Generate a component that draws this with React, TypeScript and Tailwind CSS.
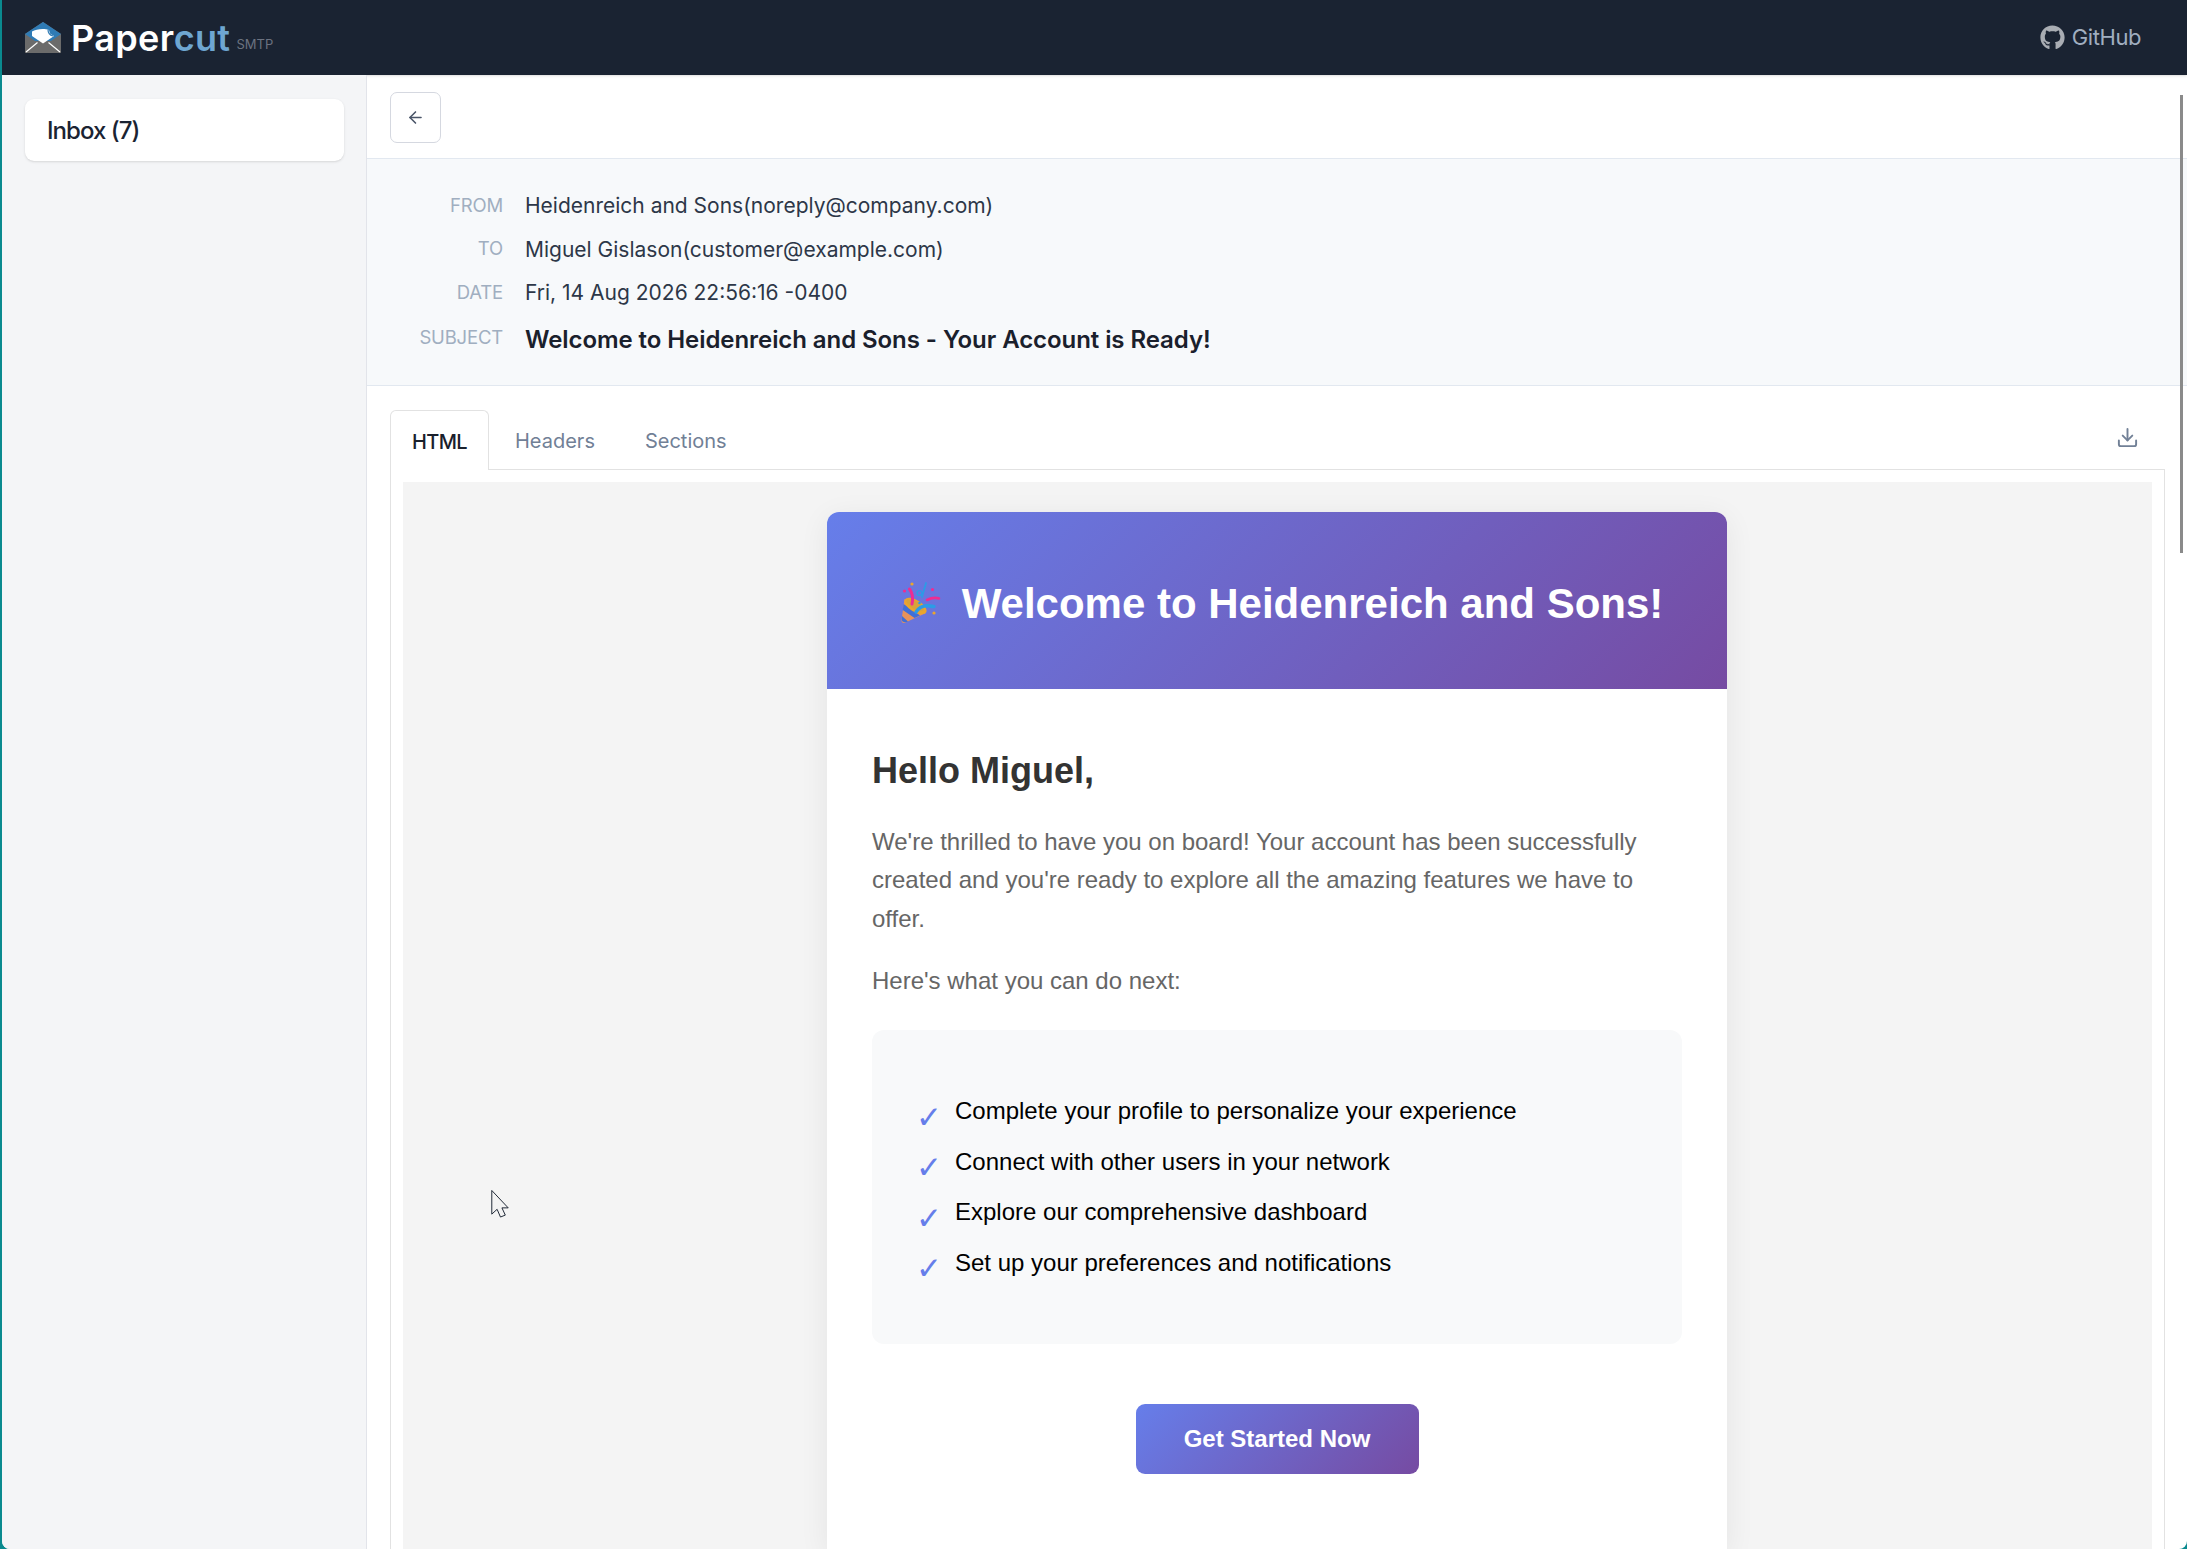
import { ArrowLeft, Download } from "lucide-react";
import { FaGithub } from "react-icons/fa";

const metaRows = [
  { label: "From", value: "Heidenreich and Sons(noreply@company.com)" },
  { label: "To", value: "Miguel Gislason(customer@example.com)" },
  { label: "Date", value: "Fri, 14 Aug 2026 22:56:16 -0400" },
];

const steps = [
  "Complete your profile to personalize your experience",
  "Connect with other users in your network",
  "Explore our comprehensive dashboard",
  "Set up your preferences and notifications",
];

function Logo() {
  return (
    <svg viewBox="0 0 36 31" className="w-[36px] h-[31px] shrink-0">
      <path d="M18 0 36 12V31H0V12Z" fill="#6b6b6b" />
      <path d="M18 0 36 12 26 19H10L0 12Z" fill="#2f7bb5" />
      <path d="M7 9.5c4-2.5 12-3.5 17-1.5l1 3.5 4 2.5-11 7.5L7 14Z" fill="#fff" />
      <path d="M23 7.5c0 3 1 5.5 5 6.5" fill="none" stroke="#2f7bb5" strokeWidth="1.2" />
      <path d="M1 30 12.5 20.5M35 30 23.5 20.5" stroke="#fff" strokeWidth="1.2" />
    </svg>
  );
}

// party popper, drawn because the emoji font here is not the one in the picture
function Popper() {
  return (
    <svg viewBox="0 0 40 42" role="img" aria-label="🎉" className="mt-[5px] h-[42px] w-[40px] shrink-0">
      <path d="M3.5 17 0.5 38c-.3 2.5 2 3.5 4 2.5L25 31Z" fill="#e8925a" />
      <path d="M2.6 22 19 33.5l-5.500 2.600L1.800 28ZM1 34l6 5.500c-2.800 1.800-6.500.5-6.300-2.500Z" fill="#3f6fd8" />
      <ellipse cx="14.5" cy="24" rx="12.5" ry="6" transform="rotate(32 14.5 24)" fill="#eba52c" />
      <ellipse cx="14" cy="23" rx="10" ry="4" transform="rotate(32 14 23)" fill="#d9a23a" />
      <path d="M8.5 7c3 4 4 8 2.5 15" fill="none" stroke="#ee2c92" strokeWidth="3" strokeLinecap="round" />
      <path d="M15 30c3-4.5 8-7 14-6 1 .2 2.500.5 4 .5" fill="none" stroke="#2c9be6" strokeWidth="3.400" strokeLinecap="round" />
      <path d="M26 18c3-1.500 7-3 12-1.500" fill="none" stroke="#ee2c92" strokeWidth="2.600" strokeLinecap="round" />
      <path d="M25 1 21 15" fill="none" stroke="#2c9be6" strokeWidth="1.800" strokeLinecap="round" />
      <circle cx="18.500" cy="11" r="2.400" fill="none" stroke="#2c9be6" strokeWidth="1.400" />
      <circle cx="11" cy="2" r="1.600" fill="#eba52c" />
      <circle cx="3.500" cy="9" r="1.600" fill="#ee2c92" />
      <circle cx="31.500" cy="7.500" r="1.600" fill="#ee2c92" />
      <circle cx="33" cy="31" r="1.600" fill="#eba52c" />
      <circle cx="18.500" cy="21" r="1.300" fill="#2c9be6" />
    </svg>
  );
}

function EmailPreview() {
  return (
    <div className="ml-[424px] mt-[30px] w-[900px] rounded-t-[12px] bg-white shadow-[0_6px_30px_rgba(0,0,0,0.07)] font-['Liberation_Sans',sans-serif]">
      <div className="flex h-[177px] items-center justify-center gap-[21px] rounded-t-[12px] bg-[linear-gradient(135deg,#667eea,#764ba2)] pl-[10px] text-[42px] font-bold text-white">
        <Popper />
        <h1 className="mt-[6px] leading-none">Welcome to Heidenreich and Sons!</h1>
      </div>
      <div className="px-[45px] pt-[60px]">
        <h2 className="text-[36px] leading-[44px] font-bold text-[#333333]">Hello Miguel,</h2>
        <p className="mt-[30px] text-[24px] leading-[38.4px] text-[#666666]">
          We're thrilled to have you on board! Your account has been successfully created and you're ready to explore all the amazing features we have to offer.
        </p>
        <p className="mt-[24px] text-[24px] leading-[38.4px] text-[#666666]">Here's what you can do next:</p>
        <div className="mt-[29px] flex h-[314px] flex-col justify-center gap-[14.5px] rounded-[12px] bg-[#f8f9fa] px-[45px] pt-[1px]">
          {steps.map((step) => (
            <div key={step} className="flex h-[36px] items-center text-[24px] text-black">
              <span className="-ml-[1px] w-[39px] shrink-0 pt-[12px] text-[31px] leading-none text-[#667eea] font-['DejaVu_Sans',sans-serif]">✓</span>
              <span>{step}</span>
            </div>
          ))}
        </div>
        <div className="mt-[60px] flex justify-center">
          <a className="flex h-[70px] w-[283px] items-center justify-center rounded-[9px] bg-[linear-gradient(135deg,#667eea,#764ba2)] text-[24px] font-bold text-white">
            Get Started Now
          </a>
        </div>
        <div className="mt-[75px] border-t border-[#e0e0e0]" />
      </div>
    </div>
  );
}

export default function App() {
  return (
    <div className="relative h-screen overflow-hidden bg-[#0a8a8f] font-['Inter',sans-serif]">
      <div className="ml-[2px] flex h-full flex-col overflow-hidden rounded-b-[8px] bg-white">
        <header className="flex h-[75px] shrink-0 items-center justify-between bg-[#1a2332] pl-[23px] pr-[46px] shadow-sm">
          <div className="flex items-center">
            <Logo />
            <span className="ml-[10px] text-[36px] leading-none font-semibold tracking-[0.01em] text-white">
              Paper<span className="text-[#6ea6d1]">cut</span>
            </span>
            <span className="ml-[6px] mt-[14px] text-[13px] leading-none text-[#6b7280]">SMTP</span>
          </div>
          <a className="flex items-center gap-[7px] text-[22px] tracking-[-0.02em] text-[#a0aec0]">
            <FaGithub className="h-[25px] w-[25px] text-[#a9adb3]" />
            GitHub
          </a>
        </header>

        <div className="flex min-h-0 flex-1">
          <aside className="w-[365px] shrink-0 border-r border-[#e2e4ea] bg-[#f4f5f7] pl-[23px] pr-[22px] pt-[24px]">
            <div className="flex h-[62px] items-center rounded-[9px] bg-white px-[22px] pt-[2px] text-[24px] font-medium tracking-[-0.04em] text-[#1a2332] shadow-sm">
              Inbox (7)
            </div>
          </aside>

          <main className="min-w-0 flex-1">
            <div className="flex h-[84px] items-center border-b border-[#e2e8f0] pl-[23px] pt-[2px]">
              <button className="flex h-[51px] w-[51px] items-center justify-center rounded-[7px] border border-[#d5d8e0] bg-white text-[#4a5568]">
                <ArrowLeft className="h-[19px] w-[19px]" strokeWidth={2} />
              </button>
            </div>

            <div className="flex h-[227px] flex-col border-b border-[#e2e8f0] bg-[#f7f9fb] pl-[22px] pt-[25px]">
              {metaRows.map((row) => (
                <div key={row.label} className="flex h-[43.5px] items-center">
                  <span className="w-[114px] text-right text-[18.5px] uppercase tracking-[-0.01em] text-[#a0aec0]">{row.label}</span>
                  <span className="ml-[22px] text-[21px] text-[#2d3748]">{row.value}</span>
                </div>
              ))}
              <div className="flex h-[49px] items-center pt-[1px]">
                <span className="mb-[4px] w-[114px] text-right text-[18.5px] uppercase tracking-[-0.01em] text-[#a0aec0]">Subject</span>
                <span className="ml-[22px] text-[24px] font-semibold tracking-[-0.003em] text-[#1a202c]">
                  Welcome to Heidenreich and Sons - Your Account is Ready!
                </span>
              </div>
            </div>

            <div className="pl-[23px] pr-[22px] pt-[24px]">
              <div className="flex h-[60px] items-stretch border-b border-[#e2e2e2] text-[20px]">
                <div className="-mb-px flex w-[99px] items-center justify-center rounded-t-[6px] border border-b-0 border-[#e2e2e2] bg-white pt-[2px] font-medium tracking-[-0.03em] text-[#1a202c]">
                  HTML
                </div>
                <div className="ml-[26px] flex items-center pt-[2px] text-[#718096]">Headers</div>
                <div className="ml-[50px] flex items-center pt-[2px] text-[#718096]">Sections</div>
                <div className="ml-auto flex items-start pr-[26px] pt-[16px] text-[#718096]">
                  <Download className="h-[23px] w-[23px]" strokeWidth={2} />
                </div>
              </div>
              <div className="border-x border-[#e2e2e2] px-[12px] pt-[12px]">
                <div className="h-[1200px] overflow-hidden bg-[#f4f4f4]">
                  <EmailPreview />
                </div>
              </div>
            </div>
          </main>
        </div>
      </div>

      {/* page scrollbar thumb */}
      <div className="absolute left-[2180px] top-[95px] h-[458px] w-[3px] bg-[#8a8a8a]" />

      {/* mouse pointer */}
      <svg viewBox="0 0 18 29" className="absolute left-[491px] top-[1190px] h-[28px] w-[18px]">
        <path d="M0.5 0.5V25L6 20l3.5 8 5-2-3.5-7.5H17.5Z" fill="#f3f3f3" stroke="#1a2332" strokeWidth="1" strokeLinejoin="round" />
      </svg>
    </div>
  );
}
